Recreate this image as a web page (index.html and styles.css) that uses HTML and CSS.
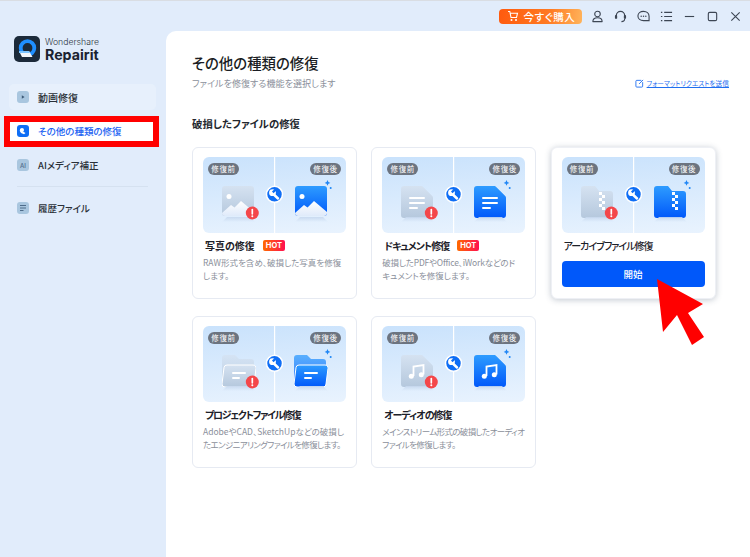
FILE: index.html
```html
<!DOCTYPE html>
<html lang="ja">
<head>
<meta charset="utf-8">
<title>Wondershare Repairit</title>
<link rel="stylesheet" href="styles.css">
</head>
<body>
<svg class="defs" width="0" height="0" aria-hidden="true">
  <defs>
    <linearGradient id="gBad" x1="0" y1="0" x2="0" y2="1"><stop offset="0" stop-color="#d5e2f1"/><stop offset="1" stop-color="#b5c8dd"/></linearGradient>
    <linearGradient id="gGood" x1="0" y1="0" x2="0" y2="1"><stop offset="0" stop-color="#2e9cff"/><stop offset="1" stop-color="#0058fa"/></linearGradient>
    <linearGradient id="gHill" x1="0" y1="0" x2="0" y2="1"><stop offset="0" stop-color="#ffffff"/><stop offset="1" stop-color="#dfeafa"/></linearGradient>
    <linearGradient id="gShadow" x1="0" y1="0" x2="0" y2="1"><stop offset="0" stop-color="#c9daf0"/><stop offset="1" stop-color="#c9daf0" stop-opacity="0"/></linearGradient>
    <symbol id="base" viewBox="0 0 143 76">
      <rect x="71" y="0" width="1.2" height="76" fill="#fff"/>
      <path d="M24 60h23l5 5H19z M97 60h23l5 5H92z" fill="url(#gShadow)"/>
      <path d="M124.5 23l.9 2 2 .9-2 .9-.9 2-.9-2-2-.9 2-.9z" fill="#1f86f5"/>
      <circle cx="127.7" cy="31" r="1" fill="#1f86f5"/>
      <circle cx="71.5" cy="37.3" r="8" fill="#0f6ef5" stroke="#fff" stroke-width="1.5"/>
      <path d="M70.300 37l4.700 4.500" stroke="#fff" stroke-width="2.500" stroke-linecap="round"/>
      <circle cx="69.500" cy="35.700" r="3.400" fill="#fff"/>
      <path d="M69.800 35.400l3.300-3.300" stroke="#0f6ef5" stroke-width="2.200"/>
      <circle cx="49.300" cy="56" r="6.500" fill="#f4474a"/>
      <path d="M49.300 52.500v4.300" stroke="#fff" stroke-width="1.700" stroke-linecap="round"/>
      <circle cx="49.300" cy="59.300" r="1" fill="#fff"/>
    </symbol>
    <symbol id="photo" viewBox="0 0 32 32">
      <rect width="32" height="30" rx="3"/>
      <circle cx="7" cy="10.500" r="2.500" fill="#fff"/>
      <path d="M0 27l9-8 3.500 2.500L19 15l13 11v1a3 3 0 0 1-3 3H3a3 3 0 0 1-3-3z" fill="url(#gHill)"/>
    </symbol>
    <symbol id="doc" viewBox="0 0 32 32">
      <path d="M3 0h17c1 0 1.500.3 2.200 1L31 9.800c.7.7 1 1.200 1 2.200v17a3 3 0 0 1-3 3H3a3 3 0 0 1-3-3V3a3 3 0 0 1 3-3z"/>
      <path d="M9 12h14M9 17h14M9 22h7" stroke="#fff" stroke-width="2" stroke-linecap="round" fill="none"/>
    </symbol>
    <symbol id="zip" viewBox="0 0 32 32">
      <path d="M3 0h11l4 5h11a3 3 0 0 1 3 3v21a3 3 0 0 1-3 3H3a3 3 0 0 1-3-3V3a3 3 0 0 1 3-3z"/>
      <path d="M18 6h3v3h-3zM21 9h3v3h-3zM18 12h3v3h-3zM21 15h3v3h-3zM18 18h3v3h-3zM21 21h3v3h-3z" fill="#fff"/>
    </symbol>
    <symbol id="folder" viewBox="0 0 34 32">
      <path d="M3 0h10l4 4h12a3 3 0 0 1 3 3v20H0V3a3 3 0 0 1 3-3z" opacity=".75"/>
      <path d="M5 10h26a3 3 0 0 1 3 3.500l-2 15.500a3 3 0 0 1-3 3H3a3 3 0 0 1-3-3l2-16.500a3 3 0 0 1 3-2.500z" stroke="#fff" stroke-width="1"/>
      <path d="M11 18h12M11 23h6" stroke="#fff" stroke-width="2" stroke-linecap="round" fill="none"/>
    </symbol>
    <symbol id="music" viewBox="0 0 32 32">
      <path d="M3 0h17c1 0 1.500.3 2.200 1L31 9.800c.7.7 1 1.200 1 2.200v17a3 3 0 0 1-3 3H3a3 3 0 0 1-3-3V3a3 3 0 0 1 3-3z"/>
      <path d="M12.500 21V11.500l10-1.500v9.500" stroke="#fff" stroke-width="1.800" fill="none"/>
      <circle cx="10.300" cy="21.300" r="2.500" fill="#fff"/>
      <circle cx="20.300" cy="19.800" r="2.500" fill="#fff"/>
    </symbol>
  </defs>
</svg>

<div class="app">
  <header class="titlebar">
    <button class="buy">
      <svg class="buy-cart" viewBox="0 0 12 12"><path d="M1 1.500h1.800l1.200 6h5.500l1-4.300H3.200" fill="none" stroke="#fff" stroke-width="1.100"/><circle cx="4.500" cy="10" r="1" fill="#fff"/><circle cx="9" cy="10" r="1" fill="#fff"/></svg>
      今すぐ購入
    </button>
    <svg class="tb-icon" viewBox="0 0 14 14"><circle cx="7" cy="4.300" r="3" fill="none" stroke="#3d4654" stroke-width="1.200"/><path d="M2 12.500c0-2.700 1.700-4.200 5-4.200s5 1.500 5 4.200z" fill="none" stroke="#3d4654" stroke-width="1.200" stroke-linejoin="round"/></svg>
    <svg class="tb-icon" viewBox="0 0 14 14"><path d="M2.500 8V6a4.500 4.500 0 0 1 9 0v2" fill="none" stroke="#3d4654" stroke-width="1.300"/><rect x="1" y="5.500" width="2.400" height="4" rx="1" fill="#3d4654"/><rect x="10.600" y="5.500" width="2.400" height="4" rx="1" fill="#3d4654"/><path d="M11.500 9.500c0 2-1.500 3-3.500 3" fill="none" stroke="#3d4654" stroke-width="1.200"/></svg>
    <svg class="tb-icon" viewBox="0 0 14 14"><path d="M7 1.500c3.400 0 6 2.200 6 5.200v4.800H7c-3.400 0-6-2-6-5s2.600-5 6-5z" fill="none" stroke="#3d4654" stroke-width="1.200"/><circle cx="4.500" cy="6.700" r=".8" fill="#3d4654"/><circle cx="7" cy="6.700" r=".8" fill="#3d4654"/><circle cx="9.500" cy="6.700" r=".8" fill="#3d4654"/></svg>
    <svg class="tb-icon" viewBox="0 0 14 14"><path d="M4.500 2.500H13M4.500 7H13M4.500 11.500H13M1 2.500h1.500M1 7h1.500M1 11.500h1.500" stroke="#3d4654" stroke-width="1.200" fill="none"/></svg>
    <svg class="tb-icon" viewBox="0 0 14 14"><path d="M2 7h10" stroke="#3d4654" stroke-width="1.200"/></svg>
    <svg class="tb-icon" viewBox="0 0 14 14"><rect x="2.500" y="2.500" width="9" height="9" rx="1.500" fill="none" stroke="#3d4654" stroke-width="1.200"/></svg>
    <svg class="tb-icon" viewBox="0 0 14 14"><path d="M2.500 2.500l9 9M11.500 2.500l-9 9" stroke="#3d4654" stroke-width="1.200"/></svg>
  </header>

  <div class="body">
    <aside class="sidebar">
      <div class="logo">
        <svg class="logo-mark" viewBox="0 0 26 26">
          <rect width="26" height="26" rx="5" fill="#1c2a3a"/>
          <circle cx="13.500" cy="12" r="6.800" fill="none" stroke="#1f8fff" stroke-width="3.800"/>
          <path d="M5 15h10l3.500 6H8z" fill="#f2f6fb"/>
          <path d="M5 15h10l1 2H5z" fill="#7cc4ff"/>
        </svg>
        <div class="logo-text">
          <span class="logo-top">Wondershare</span>
          <span class="logo-name">Repairit</span>
        </div>
      </div>
      <nav class="nav">
        <a class="nav-item nav-soft">
          <span class="nav-icon"><svg viewBox="0 0 12 12"><path d="M4.800 4.300l2.800 1.700-2.800 1.700z" fill="#3d5a78"/></svg></span>
          動画修復
        </a>
        <a class="nav-item nav-active">
          <span class="nav-icon nav-icon-active"><svg viewBox="0 0 12 12"><path d="M3.500 3.800l2 2.400 3 1.800-1.500 1.300-3-1.200-1.300-2.300z" fill="#fff"/><circle cx="5" cy="5" r="2" fill="#fff"/></svg></span>
          その他の種類の修復
        </a>
        <a class="nav-item">
          <span class="nav-icon nav-icon-text">AI</span>
          AIメディア補正
        </a>
        <hr class="nav-sep">
        <a class="nav-item">
          <span class="nav-icon"><svg viewBox="0 0 12 12"><path d="M3 3.500h6M3 6h6M3 8.500h3.500" stroke="#4f6c8a" stroke-width="1" fill="none"/></svg></span>
          履歴ファイル
        </a>
      </nav>
    </aside>

    <main class="main">
      <h1 class="page-title">その他の種類の修復</h1>
      <div class="sub-row">
        <p class="page-sub">ファイルを修復する機能を選択します</p>
        <a class="request">
          <svg class="request-icon" viewBox="0 0 10 10"><path d="M7 1.500H2a1 1 0 0 0-1 1v5.500a1 1 0 0 0 1 1h5.500a1 1 0 0 0 1-1V3.500" fill="none" stroke="#1f6ff0" stroke-width="1"/><path d="M4.500 5.500L9 1" stroke="#1f6ff0" stroke-width="1"/></svg>
          <span class="request-text">フォーマットリクエストを送信</span>
        </a>
      </div>
      <h2 class="section">破損したファイルの修復</h2>

      <div class="grid">
        <article class="card">
          <div class="art">
            <svg class="art-svg" viewBox="0 0 143 76">
              <use href="#photo" x="19" y="29" width="32" height="32" fill="url(#gBad)"/>
              <use href="#photo" x="92" y="29" width="32" height="32" fill="url(#gGood)"/>
              <use href="#base" width="143" height="76"/>
            </svg>
            <span class="tag tag-l">修復前</span><span class="tag tag-r">修復後</span>
          </div>
          <h3 class="card-title">写真の修復<span class="hot">HOT</span></h3>
          <p class="card-desc">RAW形式を含め、破損した写真を修復<br>します。</p>
        </article>

        <article class="card">
          <div class="art">
            <svg class="art-svg" viewBox="0 0 143 76">
              <use href="#doc" x="19" y="29" width="32" height="32" fill="url(#gBad)"/>
              <use href="#doc" x="92" y="29" width="32" height="32" fill="url(#gGood)"/>
              <use href="#base" width="143" height="76"/>
            </svg>
            <span class="tag tag-l">修復前</span><span class="tag tag-r">修復後</span>
          </div>
          <h3 class="card-title"><span class="kana-tight">ドキュメント修復</span><span class="hot">HOT</span></h3>
          <p class="card-desc"><span class="desc-slight">破損したPDFやOffice、iWorkなどのド</span><br>キュメントを修復します。</p>
        </article>

        <article class="card card-hover">
          <div class="art">
            <svg class="art-svg" viewBox="0 0 143 76">
              <use href="#zip" x="19" y="29" width="32" height="32" fill="url(#gBad)"/>
              <use href="#zip" x="92" y="29" width="32" height="32" fill="url(#gGood)"/>
              <use href="#base" width="143" height="76"/>
            </svg>
            <span class="tag tag-l">修復前</span><span class="tag tag-r">修復後</span>
          </div>
          <h3 class="card-title card-title-plain"><span class="kana-tight">アーカイブファイル修復</span></h3>
          <button class="start">開始</button>
        </article>

        <article class="card">
          <div class="art">
            <svg class="art-svg" viewBox="0 0 143 76">
              <use href="#folder" x="19" y="29" width="34" height="32" fill="url(#gBad)"/>
              <use href="#folder" x="91" y="29" width="34" height="32" fill="url(#gGood)"/>
              <use href="#base" width="143" height="76"/>
            </svg>
            <span class="tag tag-l">修復前</span><span class="tag tag-r">修復後</span>
          </div>
          <h3 class="card-title"><span class="kana-tighter">プロジェクトファイル修復</span></h3>
          <p class="card-desc">AdobeやCAD、SketchUpなどの破損し<br><span class="desc-tight">たエンジニアリングファイルを修復します。</span></p>
        </article>

        <article class="card">
          <div class="art">
            <svg class="art-svg" viewBox="0 0 143 76">
              <use href="#music" x="19" y="29" width="32" height="32" fill="url(#gBad)"/>
              <use href="#music" x="92" y="29" width="32" height="32" fill="url(#gGood)"/>
              <use href="#base" width="143" height="76"/>
            </svg>
            <span class="tag tag-l">修復前</span><span class="tag tag-r">修復後</span>
          </div>
          <h3 class="card-title"><span class="kana-tight">オーディオの修復</span></h3>
          <p class="card-desc"><span class="desc-tight">メインストリーム形式の破損したオーディオ<br>ファイルを修復します。</span></p>
        </article>
      </div>
    </main>
  </div>

  <div class="mark-box"></div>
  <svg class="mark-arrow" viewBox="0 0 60 75"><path d="M7 4L53 29 38 38 54 62 42 70 27 40 13 57z" fill="#ff0000"/></svg>
</div>
</body>
</html>
```
FILE: styles.css
```css
* { box-sizing: border-box; }
html, body { margin: 0; height: 100%; }
body {
  font-family: "Noto Sans CJK JP", "Noto Sans", sans-serif;
  color: #1d2129;
  font-feature-settings: "palt";
  overflow: hidden;
}
.defs { position: absolute; }
.app {
  position: relative;
  width: 750px;
  height: 557px;
  display: flex;
  flex-direction: column;
  background: #e1ecfb;
  border-top: 1px solid #d9dde3;
}

/* title bar */
.titlebar {
  height: 30px;
  flex: none;
  display: flex;
  align-items: center;
  justify-content: flex-end;
  padding: 0 3.500px 0 0;
}
.buy {
  width: 83px;
  height: 15px;
  margin-right: 4px;
  border: 0;
  border-radius: 4px;
  padding: 0 0 0 2px;
  display: flex;
  align-items: center;
  justify-content: center;
  gap: 5px;
  color: #fff;
  font: 500 10.500px "Noto Sans CJK JP", sans-serif;
  font-feature-settings: "palt";
  letter-spacing: .6px;
  background: linear-gradient(100deg, #ff5a0e 0%, #ff7a22 60%, #ffb45c 100%);
}
.buy-cart { width: 12px; height: 12px; }
.tb-icon { width: 13px; height: 13px; margin: 0 5px; }

/* layout */
.body { flex: 1; display: flex; min-height: 0; }
.sidebar { width: 166px; flex: none; display: flex; flex-direction: column; }
.main {
  flex: 1;
  background: #fff;
  border-top-left-radius: 10px;
  padding: 22px 21px 0 26px;
}

/* logo */
.logo { display: flex; align-items: center; gap: 5px; margin: 5px 0 0 14px; height: 26px; }
.logo-mark { width: 26px; height: 26px; }
.logo-text { display: flex; flex-direction: column; font-family: "Inter", sans-serif; }
.logo-top { font-size: 8.700px; line-height: 10px; font-weight: 300; color: #2b3440; }
.logo-name { font-size: 14.200px; line-height: 15px; font-weight: 700; color: #1a2230; }

/* nav */
.nav { display: flex; flex-direction: column; gap: 8px; margin: 22px 10px 0 9px; }
.nav-item {
  height: 26px;
  display: flex;
  align-items: center;
  gap: 9px;
  padding-left: 8px;
  border-radius: 5px;
  font-size: 9.500px;
  font-weight: 500;
  color: #2a3038;
}
.nav-soft { background: #e7f0fc; font-size: 10px; }
.nav-active { background: #fff; color: #1b62f2; }
.nav-icon {
  width: 12px;
  height: 12px;
  flex: none;
  border-radius: 3px;
  background: #a9c6df;
  display: flex;
  align-items: center;
  justify-content: center;
}
.nav-icon svg { width: 12px; height: 12px; }
.nav-icon-active { background: #0f6ef5; }
.nav-icon-text { font: 500 6px "Inter", sans-serif; color: #4f6c8a; }
.nav-sep { width: 131px; margin: 0 0 0 8px; border: 0; border-top: 1px solid #d5e1f0; }

/* header */
.page-title { margin: 0; font-size: 14.400px; line-height: 20px; font-weight: 500; color: #1a1d23; }
.sub-row { display: flex; justify-content: space-between; align-items: center; margin-top: 4px; height: 12px; }
.page-sub { margin: 0; font-size: 9.100px; line-height: 12px; color: #8b909b; }
.request { display: flex; align-items: center; gap: 3px; color: #1f6ff0; }
.request-icon { width: 9px; height: 9px; }
.request-text { font-size: 6.700px; line-height: 10px; text-decoration: underline; }
.section { margin: 28px 0 0; font-size: 10.400px; line-height: 14px; font-weight: 700; color: #23272e; }

/* cards */
.grid {
  display: grid;
  grid-template-columns: repeat(3, 165px);
  grid-auto-rows: 152px;
  gap: 17px 14.250px;
  margin-top: 16px;
}
.card {
  background: #fff;
  border: 1px solid #e6eaf2;
  border-radius: 6px;
  padding: 9px 10px 0;
}
.card-hover { border-color: #eef0f5; box-shadow: 0 1px 6px rgba(40, 60, 90, .28); }
.art {
  position: relative;
  width: 143px;
  height: 76px;
  border-radius: 6px;
  overflow: hidden;
  background: linear-gradient(175deg, #c9e2fc 0%, #e9f3fe 100%);
}
.art-svg { display: block; width: 143px; height: 76px; }
.tag {
  position: absolute;
  top: 5.500px;
  width: 31px;
  height: 12px;
  border-radius: 6px;
  background: #6c7480;
  color: #fff;
  font-size: 7.500px;
  line-height: 12px;
  text-align: center;
  letter-spacing: .6px;
}
.tag-l { left: 5px; }
.tag-r { right: 5px; }
.card-title {
  display: flex;
  align-items: center;
  gap: 8px;
  margin: 5px 0 0;
  padding-left: 2px;
  height: 15px;
  font-size: 10px;
  line-height: 15px;
  font-weight: 700;
  color: #1d2129;
}
.card-title-plain { font-weight: 500; }
.kana-tight { letter-spacing: -1px; }
.kana-tighter { letter-spacing: -1.300px; }
.hot {
  width: 22px;
  height: 11px;
  border-radius: 2px;
  background: linear-gradient(90deg, #ff6a00, #ff0f50);
  color: #fff;
  font: 700 7.500px/11px "Inter", sans-serif;
  text-align: center;
}
.card-desc { margin: 3px 0 0; font-size: 8.500px; line-height: 13px; color: #8b909b; white-space: nowrap; }
.desc-slight { letter-spacing: -.2px; }
.desc-tight { letter-spacing: -.65px; }
.start {
  display: block;
  width: 143px;
  height: 26px;
  margin-top: 8px;
  border: 0;
  border-radius: 4px;
  background: #0058fa;
  color: #fff;
  font: 500 9.500px "Noto Sans CJK JP", sans-serif;
}

/* red annotations laid over the screenshot */
.mark-box {
  position: absolute;
  left: 4px;
  top: 115px;
  width: 155px;
  height: 31px;
  border: 6px solid #ff0000;
  pointer-events: none;
}
.mark-arrow {
  position: absolute;
  left: 650px;
  top: 274px;
  width: 60px;
  height: 75px;
}
```
